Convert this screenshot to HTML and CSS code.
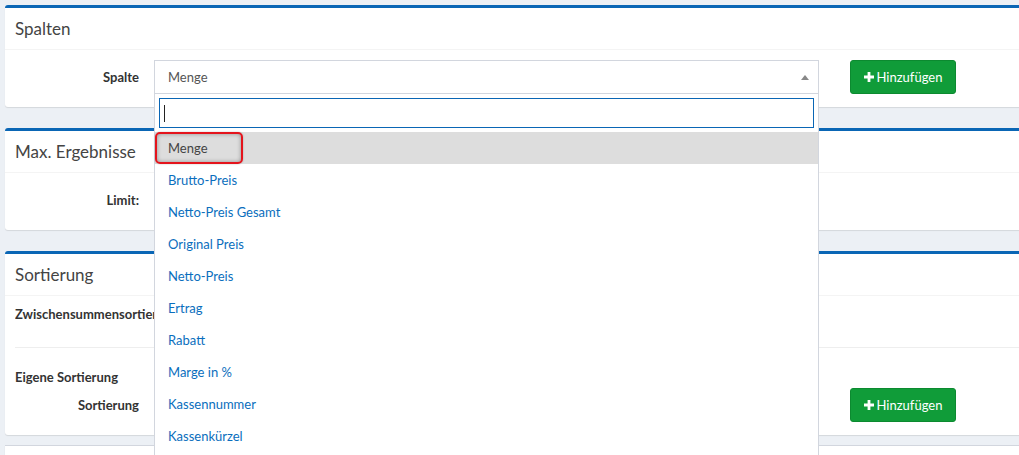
FILE: index.html
```html
<!DOCTYPE html>
<html lang="de">
<head>
<meta charset="utf-8">
<title>Spalten</title>
<link rel="stylesheet" href="styles.css">
</head>
<body>
<div class="page">
  <section class="card">
    <div class="card-header"><h3 class="card-title">Spalten</h3></div>
    <div class="card-body">
      <div class="form-row">
        <label class="form-label">Spalte</label>
        <div class="select-wrap">
          <div class="select open">
            <span class="select-value">Menge</span>
            <span class="select-arrow"></span>
          </div>
          <div class="dropdown">
            <div class="dropdown-search"><div class="search-input"><span class="caret"></span></div></div>
            <ul class="options">
              <li class="option active">Menge<span class="annot"></span></li>
              <li class="option">Brutto-Preis</li>
              <li class="option">Netto-Preis Gesamt</li>
              <li class="option">Original Preis</li>
              <li class="option">Netto-Preis</li>
              <li class="option">Ertrag</li>
              <li class="option">Rabatt</li>
              <li class="option">Marge in %</li>
              <li class="option">Kassennummer</li>
              <li class="option">Kassenkürzel</li>
            </ul>
          </div>
        </div>
        <button class="btn-add"><svg class="plus" width="10" height="10" viewBox="0 0 10 10"><path d="M3.6 0h2.8v3.6H10v2.8H6.4V10H3.6V6.4H0V3.6h3.6z" fill="#fff"/></svg>Hinzufügen</button>
      </div>
    </div>
  </section>

  <section class="card">
    <div class="card-header"><h3 class="card-title">Max. Ergebnisse</h3></div>
    <div class="card-body">
      <div class="form-row">
        <label class="form-label">Limit:</label>
        <div class="input-box"></div>
      </div>
    </div>
  </section>

  <section class="card card-last">
    <div class="card-header"><h3 class="card-title">Sortierung</h3></div>
    <div class="card-body">
      <div class="plain-label">Zwischensummensortierung</div>
      <hr class="sep">
      <div class="sub-heading">Eigene Sortierung</div>
      <div class="form-row">
        <label class="form-label">Sortierung</label>
        <div class="input-box"></div>
        <button class="btn-add"><svg class="plus" width="10" height="10" viewBox="0 0 10 10"><path d="M3.6 0h2.8v3.6H10v2.8H6.4V10H3.6V6.4H0V3.6h3.6z" fill="#fff"/></svg>Hinzufügen</button>
      </div>
    </div>
  </section>

  <section class="card card-plain"></section>
</div>
</body>
</html>
```
FILE: styles.css
```css
html, body {
  margin: 0;
  height: 455px;
  overflow: hidden;
}
body {
  background: #ecf0f5;
  font-family: "Lato", "Liberation Sans", sans-serif;
  font-size: 13px;
  color: #333;
}
.page {
  padding: 5px 0 0 5px;
}
.card {
  width: 1040px;
  background: #fff;
  border-top: 3px solid #0a66b5;
  border-radius: 3px;
  box-shadow: 0 1px 1px rgba(0, 0, 0, 0.1);
  margin-bottom: 21px;
}
.card-header {
  height: 41px;
  border-bottom: 1px solid #f4f4f4;
  display: flex;
  align-items: center;
  padding-left: 10px;
}
.card-title {
  margin: 0;
  font-size: 17px;
  font-weight: 400;
  color: #444;
}
.card-body {
  padding: 10px 10px 13px;
}
.form-row {
  display: flex;
  align-items: center;
  height: 34px;
}
.form-label {
  width: 124px;
  padding-right: 15px;
  text-align: right;
  font-weight: 700;
  color: #333;
}
.select-wrap {
  position: relative;
  width: 665px;
}
.select {
  box-sizing: border-box;
  height: 34px;
  border: 1px solid #d2d6de;
  display: flex;
  align-items: center;
  padding-left: 13px;
  color: #555;
  position: relative;
}
.select-arrow {
  position: absolute;
  right: 9px;
  top: 14px;
  width: 0;
  height: 0;
  border-left: 4px solid transparent;
  border-right: 4px solid transparent;
  border-bottom: 5px solid #888;
}
.dropdown {
  position: absolute;
  left: 0;
  top: 34px;
  width: 665px;
  box-sizing: border-box;
  background: #fff;
  border: 1px solid #d2d6de;
  border-top: none;
  padding-bottom: 40px;
  z-index: 10;
}
.dropdown-search {
  padding: 4px;
}
.search-input {
  box-sizing: border-box;
  height: 30px;
  border: 1px solid #0a66b5;
  position: relative;
}
.caret {
  position: absolute;
  left: 4px;
  top: 6px;
  width: 1px;
  height: 17px;
  background: #222;
}
.options {
  list-style: none;
  margin: 0;
  padding: 0;
}
.option {
  height: 32px;
  line-height: 32px;
  padding-left: 13px;
  color: #0a6ebd;
  position: relative;
}
.option.active {
  background: #dddddd;
  color: #444;
}
.annot {
  position: absolute;
  left: 0;
  top: 0;
  width: 88px;
  height: 32px;
  box-sizing: border-box;
  border: 2px solid #e4141c;
  border-radius: 5px;
  box-shadow: inset 0 0 4px rgba(0, 0, 0, 0.35), 0 0 2px rgba(0, 0, 0, 0.25);
}
.btn-add {
  margin-left: 31px;
  box-sizing: border-box;
  width: 106px;
  height: 34px;
  border: 1px solid #0c8a30;
  border-radius: 3px;
  background: #109c39;
  color: #fff;
  font-family: inherit;
  font-size: 13px;
  display: flex;
  align-items: center;
  justify-content: center;
  gap: 3px;
  padding: 0;
}
.input-box {
  box-sizing: border-box;
  width: 665px;
  height: 34px;
  border: 1px solid #d2d6de;
}
.plain-label {
  width: 139px;
  overflow: hidden;
  font-weight: 700;
  line-height: 16px;
  white-space: nowrap;
}
.sep {
  border: 0;
  border-top: 1px solid #eeeeee;
  margin: 25px 0 0;
}
.sub-heading {
  font-weight: 700;
  line-height: 18px;
  margin-top: 20px;
  margin-bottom: 2px;
}
.card-last {
  margin-bottom: 10px;
}
.card-plain {
  border-top: 1px solid #d2d6de;
  height: 40px;
  border-radius: 0;
}
```
